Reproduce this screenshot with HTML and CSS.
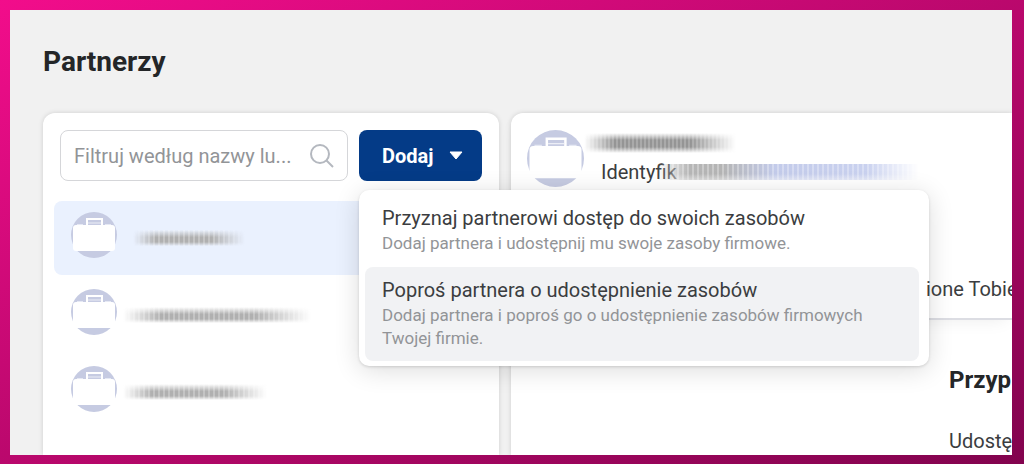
FILE: index.html
```html
<!DOCTYPE html>
<html lang="pl">
<head>
    <meta charset="UTF-8">
    <meta name="viewport" content="width=device-width, initial-scale=1.0">
    <title>Partnerzy</title>
    <link rel="stylesheet" href="styles.css">
</head>
<body>
    <!-- Briefcase avatar shared by the list and the details header -->
    <svg class="sprite" aria-hidden="true">
        <symbol id="briefcase" viewBox="0 0 46 46">
            <circle cx="23" cy="23" r="23" fill="#c6cbe2"/>
            <path d="M16 13V7h15v6" fill="none" stroke="#fff" stroke-width="2"/>
            <path d="M17 11h13" stroke="#eceef6" stroke-width="1"/>
            <path d="M6 12h6v2H6zM34 12h6v2h-6z" fill="#e6e9f4"/>
            <rect x="2" y="13" width="42" height="26" rx="3" fill="#fff"/>
        </symbol>
    </svg>

    <div class="app">
        <h1>Partnerzy</h1>

        <div class="panels">
            <!-- Partner list -->
            <section class="panel list-panel">
                <div class="toolbar">
                    <div class="search">
                        <input type="text" aria-label="Filtruj według nazwy" placeholder="Filtruj według nazwy lu...">
                        <svg class="search-icon" viewBox="0 0 24 24" aria-hidden="true">
                            <circle cx="10" cy="10" r="9"/>
                            <path d="M16 16l7 7"/>
                        </svg>
                    </div>
                    <div class="dropdown">
                        <button class="add-button" type="button" aria-haspopup="true" aria-expanded="true">
                            Dodaj
                            <svg class="caret" viewBox="0 0 14 9" aria-hidden="true">
                                <path d="M1 1h12L7 8z"/>
                            </svg>
                        </button>
                        <div class="menu">
                            <button class="menu-item" type="button">
                                <span class="menu-title">Przyznaj partnerowi dostęp do swoich zasobów</span>
                                <span class="menu-text">Dodaj partnera i udostępnij mu swoje zasoby firmowe.</span>
                            </button>
                            <button class="menu-item active" type="button">
                                <span class="menu-title">Poproś partnera o udostępnienie zasobów</span>
                                <span class="menu-text">Dodaj partnera i poproś go o udostępnienie zasobów firmowych Twojej firmie.</span>
                            </button>
                        </div>
                    </div>
                </div>

                <ul class="partners">
                    <li class="partner selected">
                        <svg class="avatar"><use href="#briefcase"/></svg>
                        <span class="smudge short"></span>
                    </li>
                    <li class="partner">
                        <svg class="avatar"><use href="#briefcase"/></svg>
                        <span class="smudge long"></span>
                    </li>
                    <li class="partner">
                        <svg class="avatar"><use href="#briefcase"/></svg>
                        <span class="smudge medium"></span>
                    </li>
                </ul>
            </section>

            <!-- Partner details -->
            <section class="panel details-panel">
                <header class="details-header">
                    <div class="identity">
                        <svg class="avatar large"><use href="#briefcase"/></svg>
                        <div class="identity-text">
                            <span class="smudge name"></span>
                            <div class="identifier">Identyfik<span class="smudge number"></span></div>
                        </div>
                    </div>
                    <nav class="tabs">
                        <a href="#">ione Tobie</a>
                    </nav>
                </header>
                <div class="assets">
                    <h2>Przyp</h2>
                    <p>Udostę</p>
                </div>
            </section>
        </div>
    </div>
</body>
</html>
```

FILE: styles.css
```css
* {
    box-sizing: border-box;
}

body {
    margin: 0;
    padding: 10px 12px 9px 10px;
    height: 100vh;
    overflow: hidden;
    background: linear-gradient(to bottom right, #f20d8b, #82034e);
    font-family: Roboto, "Liberation Sans", sans-serif;
    font-size: 20px;
    color: #3b3d40;
}

h1,
h2,
p,
ul {
    margin: 0;
    padding: 0;
}

button,
input {
    font-family: inherit;
}

.sprite {
    position: absolute;
    width: 0;
    height: 0;
}

.app {
    display: flex;
    flex-direction: column;
    height: 100%;
    padding: 34px 0 0 33px;
    overflow: hidden;
    background: #f1f1f1;
}

h1 {
    margin-bottom: 33px;
    font-size: 28px;
    line-height: 36px;
    font-weight: 700;
    color: #242628;
}

/* Panels */
.panels {
    display: flex;
    flex: 1;
    gap: 12px;
}

.panel {
    min-width: 0;
    background: #fff;
    box-shadow: 0 0 5px rgba(0, 0, 0, 0.14);
}

.list-panel {
    flex: 0 0 456px;
    border-radius: 12px 12px 0 0;
}

.details-panel {
    flex: 1;
    border-radius: 12px 0 0 0;
}

/* Search and add button */
.toolbar {
    display: flex;
    gap: 11px;
    padding: 17px 17px 20px;
}

.search {
    display: flex;
    align-items: center;
    flex: 1;
    min-width: 0;
    height: 51px;
    padding: 0 13px;
    border: 1px solid #d5d6d9;
    border-radius: 8px;
}

.search input {
    flex: 1;
    min-width: 0;
    padding: 0;
    border: none;
    outline: none;
    font-size: 20px;
    color: #3b3d40;
}

.search input::placeholder {
    color: #929497;
}

.search-icon {
    flex: none;
    width: 24px;
    height: 24px;
    fill: none;
    stroke: #b4b8bf;
    stroke-width: 2;
}

.dropdown {
    position: relative;
}

.add-button {
    display: flex;
    align-items: center;
    justify-content: space-between;
    width: 123px;
    height: 51px;
    padding: 0 19px 0 23px;
    border: none;
    border-radius: 8px;
    background: #043b87;
    color: #fff;
    font-size: 20px;
    font-weight: 700;
}

.caret {
    width: 14px;
    height: 9px;
    fill: #fff;
    stroke: #fff;
    stroke-linejoin: round;
}

/* Menu under the add button */
.menu {
    position: absolute;
    top: calc(100% + 9px);
    left: 0;
    z-index: 2;
    display: flex;
    flex-direction: column;
    gap: 1px;
    width: 570px;
    padding: 5px 10px 5px 6px;
    border-radius: 10px;
    background: #fff;
    box-shadow: 0 1px 3px rgba(0, 0, 0, 0.14), 0 4px 26px rgba(0, 0, 0, 0.14);
}

.menu-item {
    padding: 9px 17px 11px;
    border: none;
    border-radius: 8px;
    background: none;
    text-align: left;
}

.menu-item.active {
    background: #f1f2f4;
}

.menu-title,
.menu-text {
    display: block;
}

.menu-title {
    font-size: 20px;
    line-height: 28px;
    color: #3b3d40;
}

.menu-text {
    font-size: 17px;
    line-height: 23px;
    color: #929497;
}

/* Partner list */
.partners {
    display: flex;
    flex-direction: column;
    gap: 3px;
    padding: 0 11px;
    list-style: none;
}

.partner {
    display: flex;
    gap: 6px;
    height: 74px;
    padding: 11px 17px;
    border-radius: 8px;
}

.partner.selected {
    background: #eaf1fe;
}

.avatar {
    flex: none;
    width: 46px;
    height: 46px;
}

.avatar.large {
    width: 57px;
    height: 57px;
}

/* Smeared-out names */
.smudge {
    display: block;
    height: 16px;
    margin-top: 18px;
    background:
        repeating-linear-gradient(to right, rgba(255, 255, 255, 0.25) 0 2px, transparent 2px 5px),
        linear-gradient(transparent, #b0b0b0 45%, #b0b0b0 75%, transparent);
    -webkit-mask-image: linear-gradient(to right, transparent, #000 20%, #000 70%, transparent);
    mask-image: linear-gradient(to right, transparent, #000 20%, #000 70%, transparent);
}

.smudge.short {
    width: 112px;
    margin-left: 10px;
}

.smudge.long {
    width: 188px;
}

.smudge.medium {
    width: 144px;
}

.smudge.name {
    width: 152px;
    height: 20px;
    margin-top: 3px;
    background:
        repeating-linear-gradient(to right, rgba(255, 255, 255, 0.2) 0 2px, transparent 2px 4px),
        linear-gradient(transparent, #959595 35%, #959595 70%, transparent);
}

.smudge.number {
    width: 262px;
    height: 16px;
    margin: 0 0 0 -20px;
    background:
        linear-gradient(transparent 60%, rgba(255, 255, 255, 0.5)),
        repeating-linear-gradient(to right, rgba(255, 255, 255, 0.3) 0 2px, transparent 2px 5px),
        linear-gradient(to right, #b8b8b8, #b4b4b4 25%, #c3cbea 45%, #cdd5f2);
    -webkit-mask-image: linear-gradient(to right, transparent, #000 12%, #000 80%, transparent);
    mask-image: linear-gradient(to right, transparent, #000 12%, #000 80%, transparent);
}

/* Details */
.details-header {
    display: flex;
    flex-direction: column;
    height: 207px;
    border-bottom: 2px solid #dcdde3;
    box-shadow: 0 6px 16px -6px rgba(0, 0, 0, 0.08);
}

.identity {
    display: flex;
    flex: 1;
    padding: 17px 0 0 16px;
}

.identity-text {
    white-space: nowrap;
}

.identifier {
    display: flex;
    align-items: center;
    padding-left: 17px;
    margin-top: 7px;
    line-height: 24px;
}

/* The tab label stays readable above the menu edge */
.tabs {
    position: relative;
    z-index: 3;
    margin-left: 415px;
    padding-bottom: 15px;
    overflow: hidden;
    white-space: nowrap;
}

.tabs a {
    color: #3b3d40;
    line-height: 28px;
    text-decoration: none;
}

.assets {
    padding: 44px 0 0 438px;
    overflow: hidden;
    white-space: nowrap;
}

h2 {
    margin-bottom: 31px;
    font-size: 24px;
    line-height: 32px;
    font-weight: 700;
    color: #242628;
}

.assets p {
    line-height: 28px;
}
```
